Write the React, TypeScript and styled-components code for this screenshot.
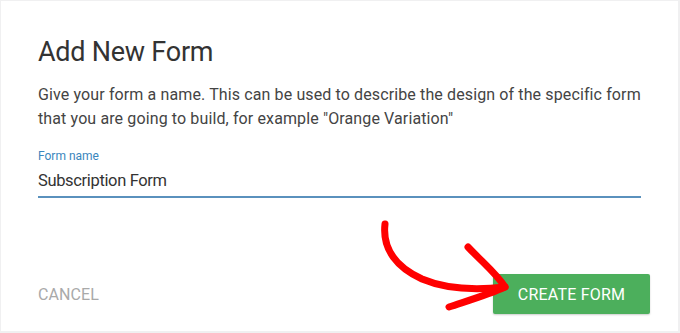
import styled, { createGlobalStyle } from "styled-components";

const GlobalStyle = createGlobalStyle`
  html, body {
    margin: 0;
    padding: 0;
    background: #f0f0f1;
  }
  #root {
    padding: 1px 2px 2px 1px;
  }
`;

const Card = styled.div`
  position: relative;
  background: #ffffff;
  height: 330px;
  display: flex;
  flex-direction: column;
  font-family: Roboto, "Liberation Sans", sans-serif;
  box-sizing: border-box;
  padding-top: 34px;
  padding-bottom: 17px;
`;

const Body = styled.div`
  padding: 0 37px;
`;

const Title = styled.h2`
  margin: 0;
  font-size: 27px;
  line-height: 34px;
  font-weight: 400;
  letter-spacing: -0.25px;
  color: #333333;
`;

const Description = styled.p`
  margin: 14px -12px 0 0;
  font-size: 16px;
  line-height: 24px;
  letter-spacing: 0.12px;
  color: #444444;
`;

const Field = styled.label`
  display: flex;
  flex-direction: column;
  margin-top: 17px;
`;

const FieldLabel = styled.span`
  font-size: 12px;
  line-height: 16px;
  color: #3a86bd;
`;

const TextInput = styled.input`
  margin-top: 5px;
  border: none;
  border-bottom: 2px solid #5a91bd;
  outline: none;
  padding: 0 0 4px;
  height: 29px;
  box-sizing: border-box;
  font-family: inherit;
  font-size: 16.5px;
  letter-spacing: -0.35px;
  line-height: 23px;
  color: #333333;
  background: transparent;
`;

const Footer = styled.div`
  margin-top: auto;
  display: flex;
  align-items: center;
  justify-content: space-between;
  padding: 0 28px 0 37px;
`;

const TextButton = styled.button`
  border: none;
  background: none;
  padding: 0;
  font-family: inherit;
  font-size: 16px;
  letter-spacing: 0.1px;
  color: #a9a9a9;
  text-transform: uppercase;
`;

const PrimaryButton = styled.button`
  border: none;
  height: 40px;
  width: 157px;
  border-radius: 2px;
  background: #4caf5c;
  color: #ffffff;
  font-family: inherit;
  font-size: 16px;
  letter-spacing: 0.2px;
  text-transform: uppercase;
  box-shadow: 0 1px 2px rgba(0, 0, 0, 0.2);
`;

const Arrow = styled.svg`
  position: absolute;
  left: 0;
  top: 0;
  pointer-events: none;
`;

const App = () => {
  return (
    <>
      <GlobalStyle />
      <Card>
        <Body>
          <Title>Add New Form</Title>
          <Description>
            Give your form a name. This can be used to describe the design of
            the specific form that you are going to build, for example "Orange
            Variation"
          </Description>
          <Field>
            <FieldLabel>Form name</FieldLabel>
            <TextInput defaultValue="Subscription Form" />
          </Field>
        </Body>
        <Footer>
          <TextButton>Cancel</TextButton>
          <PrimaryButton>Create Form</PrimaryButton>
        </Footer>
        <Arrow width="677" height="330" viewBox="1 1 677 330">
          <g
            fill="none"
            stroke="#ff0000"
            strokeWidth="7"
            strokeLinecap="round"
            strokeLinejoin="round"
          >
            <path d="M385 224 C382 250 398 268 422 279 C448 290 478 290 505 287" />
            <path d="M468 247 C482 262 496 273 505 287 C490 294 470 300 449 307" />
          </g>
        </Arrow>
      </Card>
    </>
  );
};

export default App;
